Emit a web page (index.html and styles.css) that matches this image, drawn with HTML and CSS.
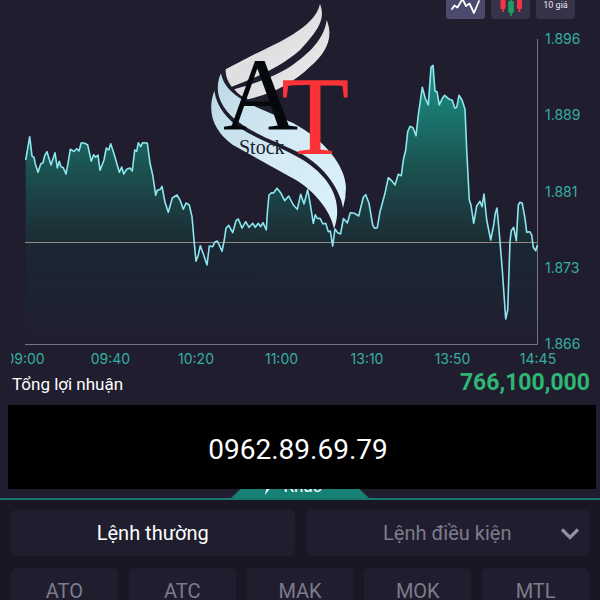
FILE: index.html
```html
<!DOCTYPE html>
<html lang="vi">
<head>
<meta charset="utf-8">
<meta name="viewport" content="width=device-width, initial-scale=1">
<title>AT Stock</title>
<link rel="stylesheet" href="styles.css">
</head>
<body>
<main class="market">
  <div class="toolbar">
    <button class="tool tool-active" type="button" aria-label="Biểu đồ đường">
      <svg width="30" height="18" viewBox="0 0 30 18"><path d="M1 13L3.500 9.500L6.500 11.500L11.500 3L15 10L18.500 7.500L23 17L28 5" fill="none" stroke="#fff" stroke-width="1.800" stroke-linejoin="round" stroke-linecap="round"/></svg>
    </button>
    <button class="tool" type="button" aria-label="Biểu đồ nến">
      <svg width="26" height="24" viewBox="0 0 26 24"><g fill="#f23645"><rect x="2.500" y="4" width="5" height="12" rx="1"/><rect x="4.200" y="2" width="1.600" height="17"/><rect x="19" y="4" width="5" height="12" rx="1"/><rect x="20.700" y="2" width="1.600" height="17"/></g><g fill="#1f9d63"><rect x="10.200" y="8" width="5.600" height="12" rx="1"/><rect x="12.200" y="5" width="1.600" height="18"/></g></svg>
    </button>
    <button class="tool" type="button">10 giá</button>
  </div>

  <section class="chart" aria-label="Biểu đồ chỉ số">
    <svg class="plot" viewBox="25 19 513 326" preserveAspectRatio="none">
      <defs>
        <linearGradient id="area" gradientUnits="userSpaceOnUse" x1="0" y1="65" x2="0" y2="345">
          <stop offset="0" stop-color="#1f9484"/>
          <stop offset=".2" stop-color="#1a716a"/>
          <stop offset=".36" stop-color="#1b5351"/>
          <stop offset=".63" stop-color="#1c2b34"/>
          <stop offset=".64" stop-color="#1a2733"/>
          <stop offset="1" stop-color="#201e2f"/>
        </linearGradient>
      </defs>
      <path fill="url(#area)" d="M25.700 160L29.700 136.700L32 156L34 157.300L35.300 164L38 172.300L40.700 164L43 162.700L44.700 155.700L47 151.700L51 165L55 152.700L57.300 168L59.300 161.300L61 166.700L63.300 167.700L66 174L68 163.300L70.300 149.300L74 151.500L76.700 148.700L79 151L81.300 142.700L84.700 143.300L87.700 145L91.300 161.300L93.700 154.700L95.700 157.300L98 155L100 170.300L104 160L106.300 148L108.700 150L110.700 143.700L113.700 152.700L119.300 172.300L121.700 167L123.700 174L126.700 169.300L130 168L132.300 171L134.700 150L136.700 151.300L138.300 142.700L140.700 146.700L142.700 142.700L147.300 143L150 163.300L152.700 175L155.700 195.300L157.300 190.300L160.300 189.300L162 186.300L165 202.300L168.300 212.300L172.300 198L177 195L180.300 200.700L183.300 209.300L186 203L189.300 205L192 216.700L194 240L196 261.300L198.300 255L200.300 245.700L203.700 255L207 265L209.300 246L212.700 246.700L214.700 242.300L217.300 241L219.700 246L222 251.300L224.300 240L226 228.300L228.700 225.300L232.700 232.700L236 220.700L238.300 219L242 228L245.700 221.700L249 227.300L252.700 223.300L255.300 227.300L258.300 223.300L260.700 226.700L263 222.700L266.300 230L267.300 213L269 195L271.700 192.700L273.500 193L277 188.300L281 193.300L284.700 200.700L288.700 196L293.300 205L297.300 209.300L300.700 194.300L304 204L307.700 189.700L310.700 206.700L313.300 223.300L315.300 214.700L317.300 218.500L320 218.300L323 224L325.700 223.300L328.300 231.700L330.300 231L332.700 246L335 229L337.700 232.700L340.500 234L343.500 218.500L347.300 223L350.300 212.700L354.300 213.300L358.700 216L363.300 197.300L365.700 194.700L369 203.300L372.700 225L374.700 228.300L377.300 227.700L380 211.700L385 193.300L388.300 177.700L391.700 180.700L395 185L398.300 174.300L401.300 175.700L403.300 160L405.700 150L407.700 131.700L410 126.300L413 127.700L416 135.700L418.300 115L420.700 98.300L422.300 87.300L425.300 98.300L428.300 105L431 67.300L433 65.300L435 91L437 91.700L439.300 105L442.300 98.300L444.700 95.300L449.300 99.300L452.300 100.300L454.700 108L456.700 107.300L459 95.300L462 100L465 109.300L466.700 150L469.300 200L471 205L473.700 223.300L476.700 206L480 201.300L482 206.700L484 194L486.700 220L490.700 240L493.700 225L495.300 213.300L497 208L499.300 233.300L502.300 270L505.700 319L507.700 310L510 241.700L511.300 230.700L513.700 227.300L516.300 240.700L518.300 205L520 202.300L522.300 203.300L525 218.300L526.700 232.300L529.700 231.700L531.700 235L533.300 247.300L535.700 250.700L537.300 245V344H25.700Z"/>
      <path class="axis" d="M537.500 39V344.500H25"/>
      <path class="reference" d="M25 242.500H537"/>
      <path class="line" d="M25.700 160L29.700 136.700L32 156L34 157.300L35.300 164L38 172.300L40.700 164L43 162.700L44.700 155.700L47 151.700L51 165L55 152.700L57.300 168L59.300 161.300L61 166.700L63.300 167.700L66 174L68 163.300L70.300 149.300L74 151.500L76.700 148.700L79 151L81.300 142.700L84.700 143.300L87.700 145L91.300 161.300L93.700 154.700L95.700 157.300L98 155L100 170.300L104 160L106.300 148L108.700 150L110.700 143.700L113.700 152.700L119.300 172.300L121.700 167L123.700 174L126.700 169.300L130 168L132.300 171L134.700 150L136.700 151.300L138.300 142.700L140.700 146.700L142.700 142.700L147.300 143L150 163.300L152.700 175L155.700 195.300L157.300 190.300L160.300 189.300L162 186.300L165 202.300L168.300 212.300L172.300 198L177 195L180.300 200.700L183.300 209.300L186 203L189.300 205L192 216.700L194 240L196 261.300L198.300 255L200.300 245.700L203.700 255L207 265L209.300 246L212.700 246.700L214.700 242.300L217.300 241L219.700 246L222 251.300L224.300 240L226 228.300L228.700 225.300L232.700 232.700L236 220.700L238.300 219L242 228L245.700 221.700L249 227.300L252.700 223.300L255.300 227.300L258.300 223.300L260.700 226.700L263 222.700L266.300 230L267.300 213L269 195L271.700 192.700L273.500 193L277 188.300L281 193.300L284.700 200.700L288.700 196L293.300 205L297.300 209.300L300.700 194.300L304 204L307.700 189.700L310.700 206.700L313.300 223.300L315.300 214.700L317.300 218.500L320 218.300L323 224L325.700 223.300L328.300 231.700L330.300 231L332.700 246L335 229L337.700 232.700L340.500 234L343.500 218.500L347.300 223L350.300 212.700L354.300 213.300L358.700 216L363.300 197.300L365.700 194.700L369 203.300L372.700 225L374.700 228.300L377.300 227.700L380 211.700L385 193.300L388.300 177.700L391.700 180.700L395 185L398.300 174.300L401.300 175.700L403.300 160L405.700 150L407.700 131.700L410 126.300L413 127.700L416 135.700L418.300 115L420.700 98.300L422.300 87.300L425.300 98.300L428.300 105L431 67.300L433 65.300L435 91L437 91.700L439.300 105L442.300 98.300L444.700 95.300L449.300 99.300L452.300 100.300L454.700 108L456.700 107.300L459 95.300L462 100L465 109.300L466.700 150L469.300 200L471 205L473.700 223.300L476.700 206L480 201.300L482 206.700L484 194L486.700 220L490.700 240L493.700 225L495.300 213.300L497 208L499.300 233.300L502.300 270L505.700 319L507.700 310L510 241.700L511.300 230.700L513.700 227.300L516.300 240.700L518.300 205L520 202.300L522.300 203.300L525 218.300L526.700 232.300L529.700 231.700L531.700 235L533.300 247.300L535.700 250.700L537.300 245"/>
    </svg>
    <div class="y-axis"><span>1.896</span><span>1.889</span><span>1.881</span><span>1.873</span><span>1.866</span></div>
  </section>
  <div class="x-axis"><span>09:00</span><span>09:40</span><span>10:20</span><span>11:00</span><span>13:10</span><span>13:50</span><span>14:45</span></div>

  <svg class="logo" viewBox="208 0 142 234" role="img" aria-label="AT Stock">
    <defs>
      <linearGradient id="silver" x1="0" y1="0" x2="1" y2="1"><stop offset="0" stop-color="#f0f0f0"/><stop offset=".5" stop-color="#dedee0"/><stop offset="1" stop-color="#f4f4f4"/></linearGradient>
      <linearGradient id="ice" x1="0" y1="0" x2="1" y2="1"><stop offset="0" stop-color="#bdd9e6"/><stop offset=".5" stop-color="#d5eaf4"/><stop offset="1" stop-color="#d9f2f8"/></linearGradient>
    </defs>
    <path fill="url(#silver)" d="M320 4C325 17 321 28 300 50C282 66 260 76 231.700 86.700Q225 78 225.700 69.300L253 55C275 44 315 28 320 4Z"/>
    <path fill="url(#silver)" d="M326.700 20C334 38 326 53 310 66.700C293 83 274 93 248.300 99.300Q239 96 234.300 89.300C260 82 277 75 290 66.700C310 53 324 39 326.700 20Z"/>
    <path fill="url(#ice)" d="M221 73.300C224 88 235 98 263 110L293 123C326 141 345 166 346 187Q346 198 343 208C341 192 326 167 300 153C280 143 258 136 240 123C220 109 213 91 221 73.300Z"/>
    <path fill="url(#ice)" d="M214.300 90.700C217 109 229 120 240 128C260 141 286 149 303 160C330 177 344 201 334 229C331 211 313 188 290 176.700L233 145C215 132 206 114 214.300 90.700Z"/>
    <text class="mark-a" x="223" y="130">A</text>
    <text class="mark-t" x="281" y="154">T</text>
    <text class="mark-name" x="239" y="154">Stock</text>
  </svg>
</main>

<section class="profit"><span class="profit-label">Tổng lợi nhuận</span><strong class="profit-value">766,100,000</strong></section>

<div class="banner">0962.89.69.79</div>

<nav class="tabs">
  <button class="tab" type="button">
    <svg width="12" height="20" viewBox="0 0 12 20" aria-hidden="true"><path d="M5 0H12L9 7H12L3 19L5 10H1Z" fill="#fff"/></svg>
    Khác
  </button>
</nav>

<section class="order">
  <div class="order-kinds">
    <button class="card card-active" type="button">Lệnh thường</button>
    <div class="picker">
      <select class="card" aria-label="Lệnh điều kiện"><option>Lệnh điều kiện</option></select>
      <svg class="chevron" width="20" height="14" viewBox="0 0 20 14" aria-hidden="true"><path d="M2 2.500L10 10.500L18 2.500" fill="none" stroke="#9290a0" stroke-width="3.200"/></svg>
    </div>
  </div>
  <div class="order-types">
    <button class="card" type="button">ATO</button>
    <button class="card" type="button">ATC</button>
    <button class="card" type="button">MAK</button>
    <button class="card" type="button">MOK</button>
    <button class="card" type="button">MTL</button>
  </div>
</section>
</body>
</html>
```

FILE: styles.css
```css
* {
  box-sizing: border-box;
}

body {
  margin: 0;
  height: 100vh;
  overflow: hidden;
  background: #201e2e;
  color: #fff;
  font-family: Roboto, "Liberation Sans", sans-serif;
}

button,
select {
  margin: 0;
  padding: 0;
  border: 0;
  font: inherit;
  color: inherit;
}

.market {
  position: relative;
}

/* Chart tools, scrolled partly out of view */
.toolbar {
  display: flex;
  justify-content: flex-end;
  align-items: flex-end;
  gap: 6px;
  height: 19px;
  padding-right: 25px;
  overflow: hidden;
}

.tool {
  display: flex;
  flex: none;
  align-items: center;
  justify-content: center;
  width: 39px;
  height: 28px;
  border-radius: 3px;
  background: #363349;
  color: #e8e8ee;
  font-size: 9px;
}

.tool-active {
  background: #4b4a6c;
}

.chart {
  display: grid;
  grid-template-columns: 1fr 62px;
  padding-left: 25px;
}

.plot {
  display: block;
  width: 100%;
  height: 326px;
}

.plot path {
  vector-effect: non-scaling-stroke;
}

.axis {
  fill: none;
  stroke: #77757f;
}

.reference {
  stroke: #94897c;
}

.line {
  fill: none;
  stroke: #8ce6ef;
  stroke-width: 1.6;
  stroke-linejoin: round;
}

.y-axis,
.x-axis {
  display: flex;
  justify-content: space-between;
  color: #35ada1;
  font-family: Inter, sans-serif;
  font-size: 14px;
  line-height: 16px;
}

.y-axis {
  flex-direction: column;
  margin: 12px 0 -7px;
  padding-left: 7px;
}

.x-axis {
  height: 22px;
  margin-left: 11px;
  padding: 6px 62px 0 14px;
  overflow: hidden;
}

.x-axis span {
  display: flex;
  justify-content: center;
  width: 0;
}

.logo {
  position: absolute;
  top: 0;
  left: calc(50% - 92px);
  width: 142px;
  height: 234px;
}

.logo text {
  font-family: "Liberation Serif", serif;
}

.logo .mark-a {
  fill: #06090c;
  font-size: 104px;
}

.logo .mark-t {
  fill: #fb3338;
  font-size: 112px;
}

.logo .mark-name {
  fill: #17232c;
  font-size: 20px;
}

.profit {
  display: flex;
  align-items: baseline;
  justify-content: space-between;
  height: 38px;
  padding: 2px 10px 0 12px;
}

.profit-label {
  font-size: 17px;
}

.profit-value {
  color: #2fb673;
  font-size: 23px;
  font-weight: 700;
}

.banner {
  height: 84px;
  margin: 0 4px 0 8px;
  padding: 4px 8px 0 0;
  background: #000;
  font-size: 28px;
  line-height: 82px;
  text-align: center;
}

.tabs {
  display: flex;
  justify-content: center;
  align-items: flex-end;
  height: 11px;
  overflow: hidden;
  border-bottom: 2px solid #19766e;
}

.tab {
  display: flex;
  flex: none;
  align-items: center;
  justify-content: center;
  gap: 9px;
  width: 138px;
  height: 32px;
  padding: 8px 16px 0 0;
  background: #168075;
  clip-path: polygon(34px 0, 104px 0, 138px 100%, 0 100%);
  font-size: 17px;
}

.order {
  padding: 10px 11px;
  background: #191723;
  color: #7d7b8b;
  font-size: 20px;
}

.order-kinds,
.order-types {
  display: grid;
  gap: 11px;
}

.order-kinds {
  grid-template-columns: 1fr 1fr;
  margin-bottom: 12px;
}

.order-types {
  grid-template-columns: repeat(5, 1fr);
}

.card {
  width: 100%;
  height: 46px;
  border-radius: 5px;
  background: #201e2e;
}

.card-active {
  color: #fff;
}

.picker {
  position: relative;
}

.picker select {
  appearance: none;
  text-align: center;
  text-align-last: center;
}

.chevron {
  position: absolute;
  top: 17px;
  right: 9px;
  pointer-events: none;
}
```
